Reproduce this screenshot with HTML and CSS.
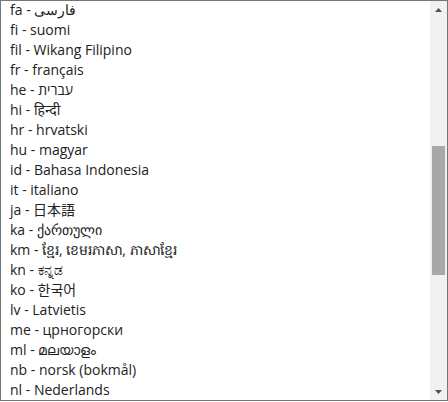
FILE: index.html
```html
<!DOCTYPE html>
<html lang="en">
<head>
<meta charset="utf-8">
<title>Languages</title>
<link rel="stylesheet" href="styles.css">
</head>
<body>
<div class="listbox" role="listbox">
  <div class="viewport">
    <ul class="options">
      <li class="option">fa - فارسی</li>
      <li class="option">fi - suomi</li>
      <li class="option">fil - Wikang Filipino</li>
      <li class="option">fr - français</li>
      <li class="option">he - עברית</li>
      <li class="option">hi - हिन्दी</li>
      <li class="option">hr - hrvatski</li>
      <li class="option">hu - magyar</li>
      <li class="option">id - Bahasa Indonesia</li>
      <li class="option">it - italiano</li>
      <li class="option">ja - 日本語</li>
      <li class="option">ka - ქართული</li>
      <li class="option">km - ខ្មែរ, ខេមរភាសា, ភាសាខ្មែរ</li>
      <li class="option">kn - ಕನ್ನಡ</li>
      <li class="option">ko - 한국어</li>
      <li class="option">lv - Latvietis</li>
      <li class="option">me - црногорски</li>
      <li class="option">ml - മലയാളം</li>
      <li class="option">nb - norsk (bokmål)</li>
      <li class="option">nl - Nederlands</li>
    </ul>
  </div>
  <div class="scrollbar">
    <div class="sb-button">
      <svg width="7" height="4" viewBox="0 0 7 4"><polygon points="3.5,0 7,4 0,4" fill="#505050"/></svg>
    </div>
    <div class="sb-track">
      <div class="sb-thumb"></div>
    </div>
    <div class="sb-button">
      <svg width="7" height="4" viewBox="0 0 7 4"><polygon points="0,0 7,0 3.5,4" fill="#505050"/></svg>
    </div>
  </div>
</div>
</body>
</html>
```
FILE: styles.css
```css
html, body {
  margin: 0;
  padding: 0;
  background: #ffffff;
}

.listbox {
  box-sizing: border-box;
  width: 448px;
  height: 401px;
  border: 1px solid #767676;
  display: flex;
  background: #ffffff;
}

.viewport {
  flex: 1;
  overflow: hidden;
}

.options {
  list-style: none;
  margin: -1px 0 0 0;
  padding: 0;
  font-family: "Open Sans", "Noto Sans", "Noto Sans CJK JP", sans-serif;
  font-size: 14px;
  color: #222222;
}

.option {
  height: 20px;
  line-height: 20px;
  padding-left: 9px;
  white-space: nowrap;
}

.scrollbar {
  width: 17px;
  background: #f1f1f1;
  display: flex;
  flex-direction: column;
}

.sb-button {
  height: 17px;
  display: flex;
  align-items: center;
  justify-content: center;
}

.sb-button svg {
  display: block;
}

.sb-track {
  flex: 1;
  padding: 128px 2px 0 2px;
}

.sb-thumb {
  height: 129px;
  background: #a8a8a8;
}
```
